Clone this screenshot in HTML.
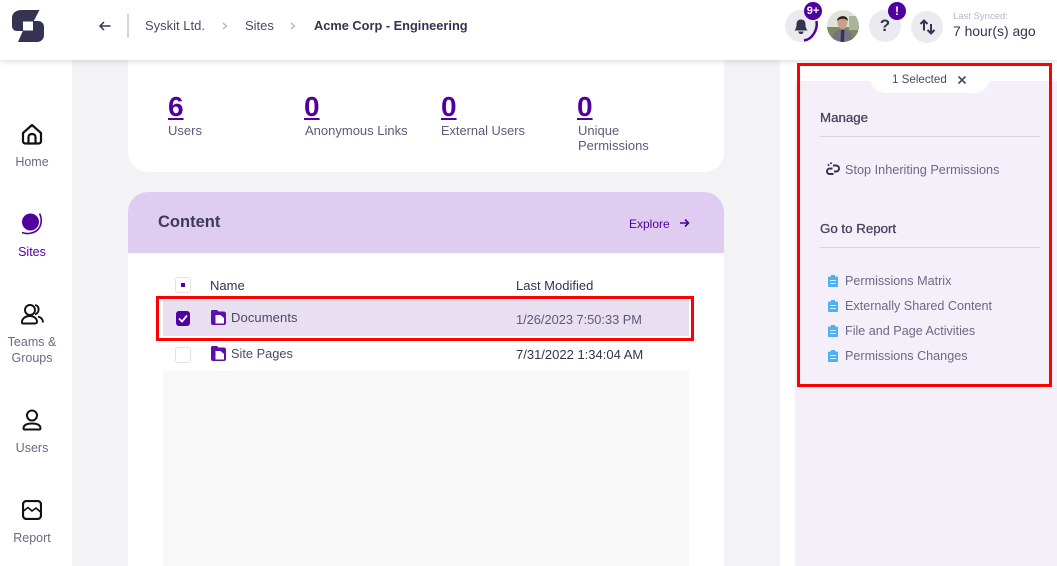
<!DOCTYPE html>
<html><head><meta charset="utf-8"><style>
html,body{margin:0;padding:0;width:1057px;height:566px;overflow:hidden}
body{position:relative;background:#f3f3f6;font-family:"Liberation Sans",sans-serif;color:#5c5a78}
.a{position:absolute;white-space:nowrap;line-height:16px}
svg{position:absolute;display:block}
.nav{position:absolute;left:0;width:64px;text-align:center;font-size:12.5px;line-height:16px;color:#6a6985}
.num{font-size:28px;font-weight:bold;color:#50009f;text-decoration:underline;line-height:30px}
.lbl{font-size:13px;color:#5c5a78;line-height:15px}
.rep{font-size:12.6px;color:#6a6985;left:845px}
.head{font-size:13.3px;color:#45435f;-webkit-text-stroke:.3px #45435f}
.red{position:absolute;border:3px solid #f00;box-sizing:border-box}
.circ{position:absolute;width:32px;height:32px;border-radius:50%;background:#ebebef}
.badge{position:absolute;border-radius:50%;background:#50009f;color:#fff;font-size:11px;font-weight:bold;text-align:center}
</style></head><body>
<div style="position:absolute;left:0;top:0;width:72px;height:566px;background:#fff"></div>
<div style="position:absolute;left:780px;top:0;width:277px;height:566px;background:#fff"></div>
<div style="position:absolute;left:795px;top:81px;width:262px;height:485px;background:#f5effa"></div>
<div style="position:absolute;left:870px;top:70px;width:120px;height:23px;background:#fff;border-radius:0 0 16px 16px"></div>

<div style="position:absolute;left:128px;top:50px;width:596px;height:122px;background:#fff;border-radius:0 0 20px 20px"></div>
<div style="position:absolute;left:128px;top:192px;width:596px;height:374px;background:#fff;border-radius:20px 20px 0 0"></div>
<div style="position:absolute;left:128px;top:192px;width:596px;height:61px;background:#decdf0;border-radius:20px 20px 0 0"></div>
<div style="position:absolute;left:163px;top:371px;width:526px;height:195px;background:#f8f8f8"></div>
<div style="position:absolute;left:163px;top:300px;width:526px;height:36px;background:#e8dff0"></div>

<div style="position:absolute;left:0;top:0;width:1057px;height:60px;background:#fff;box-shadow:0 1px 6px rgba(0,0,0,.16)"></div>

<!-- logo -->
<svg style="left:12px;top:10px" width="33" height="32" viewBox="0 0 33 32"><path fill="#343352" d="M10 0H27.500L21.500 11.500H11V21H5C2 21 0 19 0 16V8C0 3 4 0 10 0Z"/><path fill="#343352" d="M21 11H26C30 11 32 14 32 17V25C32 29 29 32 25 32H6L11 20.500H21Z"/></svg>
<svg style="left:98px;top:20px" width="14" height="12" viewBox="0 0 14 12"><path d="M12.5 6H2.500M6 2L2 6L6 10" fill="none" stroke="#343352" stroke-width="1.500"/></svg>
<div style="position:absolute;left:127px;top:14px;width:2px;height:24px;background:#d4d4da"></div>
<div class="a" style="left:145px;top:18px;font-size:13px;color:#4a4968">Syskit Ltd.</div>
<svg style="left:222px;top:22px" width="6" height="8" viewBox="0 0 6 8"><path d="M1 1L4.500 4L1 7" fill="none" stroke="#b0b0ba" stroke-width="1.200"/></svg>
<div class="a" style="left:245px;top:18px;font-size:13px;color:#4a4968">Sites</div>
<svg style="left:290px;top:22px" width="6" height="8" viewBox="0 0 6 8"><path d="M1 1L4.500 4L1 7" fill="none" stroke="#b0b0ba" stroke-width="1.200"/></svg>
<div class="a" style="left:314px;top:18px;font-size:12.8px;font-weight:bold;color:#343352">Acme Corp - Engineering</div>

<!-- top right -->
<div class="circ" style="left:785px;top:10px"></div>
<svg style="left:785px;top:10px" width="34" height="34" viewBox="0 0 34 34"><path d="M31.500 11C33 20 27 29.500 19 30.500" fill="none" stroke="#50009f" stroke-width="2.500"/><path fill="#343352" d="M16 9.500C12.500 9.500 11.500 12 11.500 14.500C11.500 17 11 18.500 9.500 20.500H22.500C21 18.500 20.500 17 20.500 14.500C20.500 12 19.500 9.500 16 9.500ZM13.500 21.500H18.500C18.500 23 17.500 24 16 24C14.500 24 13.500 23 13.500 21.500Z"/></svg>
<div class="badge" style="left:804px;top:2px;width:18px;height:18px;line-height:18px">9+</div>
<svg style="left:827px;top:10px" width="32" height="32" viewBox="0 0 32 32"><defs><clipPath id="c"><circle cx="16" cy="16" r="16"/></clipPath></defs><g clip-path="url(#c)"><rect width="32" height="32" fill="#dfe3d8"/><rect y="17" width="32" height="15" fill="#7c8a6a"/><rect x="22" y="6" width="10" height="14" fill="#aab39c"/><path d="M5 32C5 23 9 20 16 19C23 20 26 23 26 32Z" fill="#77757a"/><path d="M14 20H17.500L17 32H13.500Z" fill="#3d2c66"/><ellipse cx="15.500" cy="12.500" rx="5" ry="6.500" fill="#c9a184"/><path d="M10 11C10 5 21 4 21 11C19 8 13 8 10 11Z" fill="#2e241e"/></g></svg>
<div class="circ" style="left:869px;top:10px"></div>
<div class="a" style="left:869px;top:15px;width:32px;text-align:center;font-size:17px;font-weight:bold;line-height:22px;color:#343352">?</div>
<div class="badge" style="left:888px;top:2px;width:18px;height:18px;line-height:18px;font-size:12px">!</div>
<div class="circ" style="left:911px;top:11px"></div>
<svg style="left:919px;top:19px" width="17" height="16" viewBox="0 0 17 16"><path d="M5 11.500V2M1.500 5L5 1.500L8.500 5M12 5V14.500M8.500 11L12 14.500L15.500 11" fill="none" stroke="#343352" stroke-width="2"/></svg>
<div class="a" style="left:953px;top:11px;font-size:9.500px;line-height:12px;color:#b5b5c0">Last Synced:</div>
<div class="a" style="left:953px;top:23px;font-size:13.900px;color:#343352">7 hour(s) ago</div>

<!-- sidebar -->
<svg style="left:21px;top:123px" width="22" height="22" viewBox="0 0 22 22"><path d="M11 2L20 10V18C20 19.500 19 20.500 17.500 20.500H4.500C3 20.500 2 19.500 2 18V10Z" fill="none" stroke="#111" stroke-width="2.200" stroke-linejoin="round"/><path d="M7.500 20V14C7.500 12 9 11 11 11C13 11 14.500 12 14.500 14V20" fill="none" stroke="#111" stroke-width="2.200"/></svg>
<div class="nav" style="top:154px">Home</div>
<svg style="left:20px;top:212px" width="24" height="24" viewBox="0 0 24 24"><circle cx="10.500" cy="10" r="8.500" fill="#50009f"/><path d="M19.500 1.500C22 6 22 13 18 17.500C14 21.500 7 22.500 2 20.500" fill="none" stroke="#50009f" stroke-width="1.600"/></svg>
<div class="nav" style="top:244px;color:#50009f">Sites</div>
<svg style="left:20px;top:303px" width="24" height="22" viewBox="0 0 24 22"><circle cx="10" cy="7" r="5" fill="none" stroke="#111" stroke-width="1.900"/><path d="M15 2C18 2.500 19 5 18.500 7.500C18 9.500 16.500 11 15 11.500M2 20C1.500 16 5 13 10 13C14 13 17 15.500 17 19C17 20 16 20.500 15 20.500H3.500C2.500 20.500 2 20.500 2 20ZM18 13.500C21 14.500 23 16.500 23 19.500" fill="none" stroke="#111" stroke-width="1.900"/></svg>
<div class="nav" style="top:334px">Teams &amp;<br>Groups</div>
<svg style="left:21px;top:409px" width="22" height="22" viewBox="0 0 22 22"><circle cx="11" cy="6.500" r="5" fill="none" stroke="#111" stroke-width="2"/><path d="M2.500 19.500C2.500 16 6 14.500 11 14.500C16 14.500 19.500 16 19.500 19.500C19.500 20 19 20.500 18.500 20.500H3.500C3 20.500 2.500 20 2.500 19.500Z" fill="none" stroke="#111" stroke-width="2"/></svg>
<div class="nav" style="top:440px">Users</div>
<svg style="left:22px;top:500px" width="20" height="20" viewBox="0 0 20 20"><rect x="1" y="1" width="18" height="18" rx="3.500" fill="none" stroke="#111" stroke-width="2.200"/><path d="M1.500 11L6 7.500L10 11L14 8L18.500 12" fill="none" stroke="#111" stroke-width="1.600"/></svg>
<div class="nav" style="top:530px">Report</div>

<!-- stats -->
<div class="a num" style="left:168px;top:92px">6</div>
<div class="a lbl" style="left:168px;top:123px">Users</div>
<div class="a num" style="left:304px;top:92px">0</div>
<div class="a lbl" style="left:305px;top:123px">Anonymous Links</div>
<div class="a num" style="left:441px;top:92px">0</div>
<div class="a lbl" style="left:441px;top:123px;font-size:12.8px">External Users</div>
<div class="a num" style="left:577px;top:92px">0</div>
<div class="a lbl" style="left:578px;top:123px">Unique<br>Permissions</div>

<!-- content -->
<div class="a" style="left:158px;top:214px;font-size:16.500px;font-weight:bold;color:#3d3a58">Content</div>
<div class="a" style="left:629px;top:216px;font-size:12px;color:#50009f">Explore</div>
<svg style="left:679px;top:218px" width="11" height="10" viewBox="0 0 11 10"><path d="M1 5H9.500M6 1.500L9.500 5L6 8.500" fill="none" stroke="#50009f" stroke-width="1.600"/></svg>

<div style="position:absolute;left:175px;top:277px;width:16px;height:16px;box-sizing:border-box;border:1px solid #e2e2e6;border-radius:3px;background:#fff"></div>
<div style="position:absolute;left:181px;top:283px;width:4px;height:4px;background:#50009f"></div>
<div class="a" style="left:210px;top:278px;font-size:13px;color:#343352">Name</div>
<div class="a" style="left:516px;top:278px;font-size:13px;color:#343352">Last Modified</div>

<div style="position:absolute;left:176px;top:311px;width:14px;height:15px;background:#50009f;border-radius:3px"></div>
<svg style="left:178px;top:314px" width="10" height="9" viewBox="0 0 10 9"><path d="M1 4.500L4 7.500L9 1.500" fill="none" stroke="#fff" stroke-width="1.800"/></svg>
<svg style="left:211px;top:310px" width="15" height="15" viewBox="0 0 15 15"><path fill="#5f0fb0" d="M1.500 0H6L7.500 1.500H12.500C14 1.500 15 2.500 15 3.500V13C15 14.500 14 15 12.500 15H2C1 15 0 14.500 0 13V1.500C0 .5 .5 0 1.500 0Z"/><path fill="#fff" d="M4.500 5H9.500L13 8V13.500H4.500Z"/></svg>
<div class="a" style="left:231px;top:310px;font-size:13px;letter-spacing:.1px;color:#4a4968">Documents</div>
<div class="a" style="left:516px;top:312px;font-size:12.800px;color:#5c5a78">1/26/2023 7:50:33 PM</div>

<div style="position:absolute;left:175px;top:347px;width:16px;height:16px;box-sizing:border-box;border:1px solid #e2e2e6;border-radius:3px;background:#fff"></div>
<svg style="left:211px;top:346px" width="15" height="15" viewBox="0 0 15 15"><path fill="#5f0fb0" d="M1.500 0H6L7.500 1.500H12.500C14 1.500 15 2.500 15 3.500V13C15 14.500 14 15 12.500 15H2C1 15 0 14.500 0 13V1.500C0 .5 .5 0 1.500 0Z"/><path fill="#fff" d="M4.500 5H9.500L13 8V13.500H4.500Z"/></svg>
<div class="a" style="left:231px;top:346px;font-size:12.800px;color:#4a4968">Site Pages</div>
<div class="a" style="left:516px;top:347px;font-size:13px;color:#343352">7/31/2022 1:34:04 AM</div>

<!-- right panel -->
<div class="a" style="left:892px;top:72px;font-size:11.600px;color:#4a4968">1 Selected</div>
<svg style="left:957px;top:75px" width="10" height="10" viewBox="0 0 10 10"><path d="M1.500 1.500L8.500 8.500M8.500 1.500L1.500 8.500" stroke="#4a4968" stroke-width="1.600"/></svg>
<div class="a head" style="left:820px;top:110px">Manage</div>
<div style="position:absolute;left:820px;top:136px;width:220px;height:1px;background:#d9d6dd"></div>
<svg style="left:826px;top:162px" width="15" height="14" viewBox="0 0 15 14"><path d="M7 3.500H10C12 3.500 13 5 13 6.500C13 8 12 9.500 10 9.500H8M6.500 6.500H4C2 6.500 1 8 1 9.500C1 11 2 12 4 12H7.500" fill="none" stroke="#343352" stroke-width="1.900"/><circle cx="2.500" cy="3" r="1" fill="#343352"/><circle cx="5" cy="1.200" r="1" fill="#343352"/></svg>
<div class="a" style="left:845px;top:162px;font-size:12.700px;color:#6a6985">Stop Inheriting Permissions</div>
<div class="a head" style="left:820px;top:221px">Go to Report</div>
<div style="position:absolute;left:820px;top:247px;width:220px;height:1px;background:#d9d6dd"></div>

<svg style="left:828px;top:275px" width="10" height="12" viewBox="0 0 10 12"><path fill="#4fb0f5" d="M3 0H7V1.500H9C9.500 1.500 10 2 10 2.500V11C10 11.500 9.500 12 9 12H1C.5 12 0 11.500 0 11V2.500C0 2 .5 1.500 1 1.500H3Z"/><path d="M2 5.500H8M2 8.500H8" stroke="#d8effe" stroke-width="1"/></svg>
<div class="a rep" style="top:273px">Permissions Matrix</div>
<svg style="left:828px;top:300px" width="10" height="12" viewBox="0 0 10 12"><path fill="#4fb0f5" d="M3 0H7V1.500H9C9.500 1.500 10 2 10 2.500V11C10 11.500 9.500 12 9 12H1C.5 12 0 11.500 0 11V2.500C0 2 .5 1.500 1 1.500H3Z"/><path d="M2 5.500H8M2 8.500H8" stroke="#d8effe" stroke-width="1"/></svg>
<div class="a rep" style="top:298px">Externally Shared Content</div>
<svg style="left:828px;top:325px" width="10" height="12" viewBox="0 0 10 12"><path fill="#4fb0f5" d="M3 0H7V1.500H9C9.500 1.500 10 2 10 2.500V11C10 11.500 9.500 12 9 12H1C.5 12 0 11.500 0 11V2.500C0 2 .5 1.500 1 1.500H3Z"/><path d="M2 5.500H8M2 8.500H8" stroke="#d8effe" stroke-width="1"/></svg>
<div class="a rep" style="top:323px">File and Page Activities</div>
<svg style="left:828px;top:350px" width="10" height="12" viewBox="0 0 10 12"><path fill="#4fb0f5" d="M3 0H7V1.500H9C9.500 1.500 10 2 10 2.500V11C10 11.500 9.500 12 9 12H1C.5 12 0 11.500 0 11V2.500C0 2 .5 1.500 1 1.500H3Z"/><path d="M2 5.500H8M2 8.500H8" stroke="#d8effe" stroke-width="1"/></svg>
<div class="a rep" style="top:348px">Permissions Changes</div>

<!-- red boxes -->
<div class="red" style="left:797px;top:63px;width:255px;height:324px"></div>
<div class="red" style="left:156px;top:296px;width:538px;height:45px"></div>
</body></html>
